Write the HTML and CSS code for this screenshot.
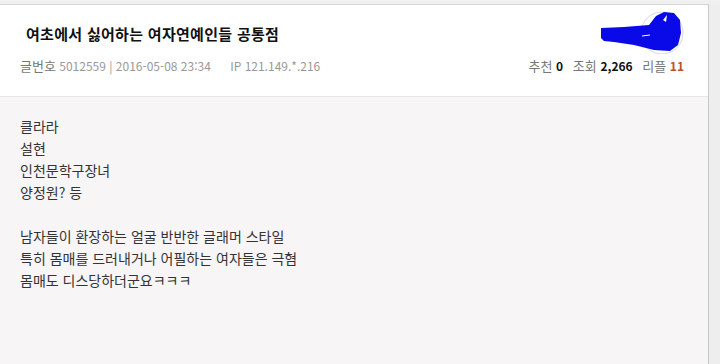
FILE: index.html
```html
<!DOCTYPE html>
<html lang="ko">
<head>
    <meta charset="UTF-8">
    <title>여초에서 싫어하는 여자연예인들 공통점</title>
    <link rel="stylesheet" href="styles.css">
</head>
<body>
    <div class="wrap">
        <div class="post">
            <div class="head">
                <div class="head-left">
                    <h1 class="title">여초에서 싫어하는 여자연예인들 공통점</h1>
                    <p class="meta">
                        <span class="label">글번호</span> 5012559 | 2016-05-08 23:34
                        <span class="ip">IP 121.149.*.216</span>
                    </p>
                </div>
                <div class="head-right">
                    <svg class="avatar" width="92" height="46" viewBox="0 0 92 46">
                        <circle cx="68" cy="25" r="21" fill="none" stroke="#d8d8e0" stroke-width="1"/>
                        <path d="M7 20 L30 19 L55 17 L62 8 L70 4 L80 5 L86 12 L87 25 L84 37 L76 43 L60 42 L40 37 L20 34 L10 33 L7 30 Z" fill="#0a0ae8"/>
                        <path d="M69 12 L73 7 L72 14 Z" fill="#fff"/>
                        <path d="M48 28 L56 27" stroke="#fff" stroke-width="1"/>
                    </svg>
                    <p class="stats">
                        <span class="k">추천</span> <b>0</b>
                        <span class="k">조회</span> <b>2,266</b>
                        <span class="k">리플</span> <b class="reply">11</b>
                    </p>
                </div>
            </div>
            <div class="content">
                <p>클라라<br>설현<br>인천문학구장녀<br>양정원? 등</p>
                <p>남자들이 환장하는 얼굴 반반한 글래머 스타일<br>특히 몸매를 드러내거나 어필하는 여자들은 극혐<br>몸매도 디스당하더군요ㅋㅋㅋ</p>
            </div>
        </div>
        <div class="gutter"></div>
    </div>
</body>
</html>
```

FILE: styles.css
```css
body {
    margin: 0;
    background-color: #f0f0f0;
    font-family: "Noto Sans CJK KR", "Noto Sans", sans-serif;
    color: #333;
}
.wrap {
    display: flex;
    height: 364px;
    padding-top: 4px;
    box-sizing: border-box;
}
.post {
    flex: 1;
    display: flex;
    flex-direction: column;
    border-top: 1px solid #d6d6d6;
    border-right: 1px solid #c8c8c8;
    background-color: #f7f5f6;
}
.gutter {
    width: 11px;
    background-color: #eeeeee;
}
.head {
    display: flex;
    justify-content: space-between;
    background-color: #fff;
    height: 92px;
    border-bottom: 1px solid #e6e6e6;
    box-sizing: border-box;
}
.head-left {
    padding-left: 20px;
}
.title {
    margin: 18px 0 0 6px;
    font-size: 15px;
    font-weight: bold;
    color: #111;
    line-height: 22px;
    letter-spacing: 0.3px;
}
.meta {
    margin: 13px 0 0;
    font-size: 12px;
    color: #999;
    line-height: 16px;
}
.meta .label {
    color: #777;
    font-size: 13px;
}
.meta .ip {
    margin-left: 16px;
}
.head-right {
    display: flex;
    flex-direction: column;
    align-items: flex-end;
    padding-right: 24px;
}
.avatar {
    display: block;
    margin-top: 3px;
    margin-right: -2px;
}
.stats {
    margin: 4px 0 0;
    font-size: 13px;
    color: #777;
    line-height: 16px;
}
.stats b {
    font-size: 12px;
    color: #111;
    margin-right: 6px;
}
.stats .reply {
    color: #c0502a;
    margin-right: 0;
}
.content {
    padding: 18px 20px;
    font-size: 14px;
    line-height: 22px;
    color: #333;
}
.content p {
    margin: 0 0 22px;
}
```
